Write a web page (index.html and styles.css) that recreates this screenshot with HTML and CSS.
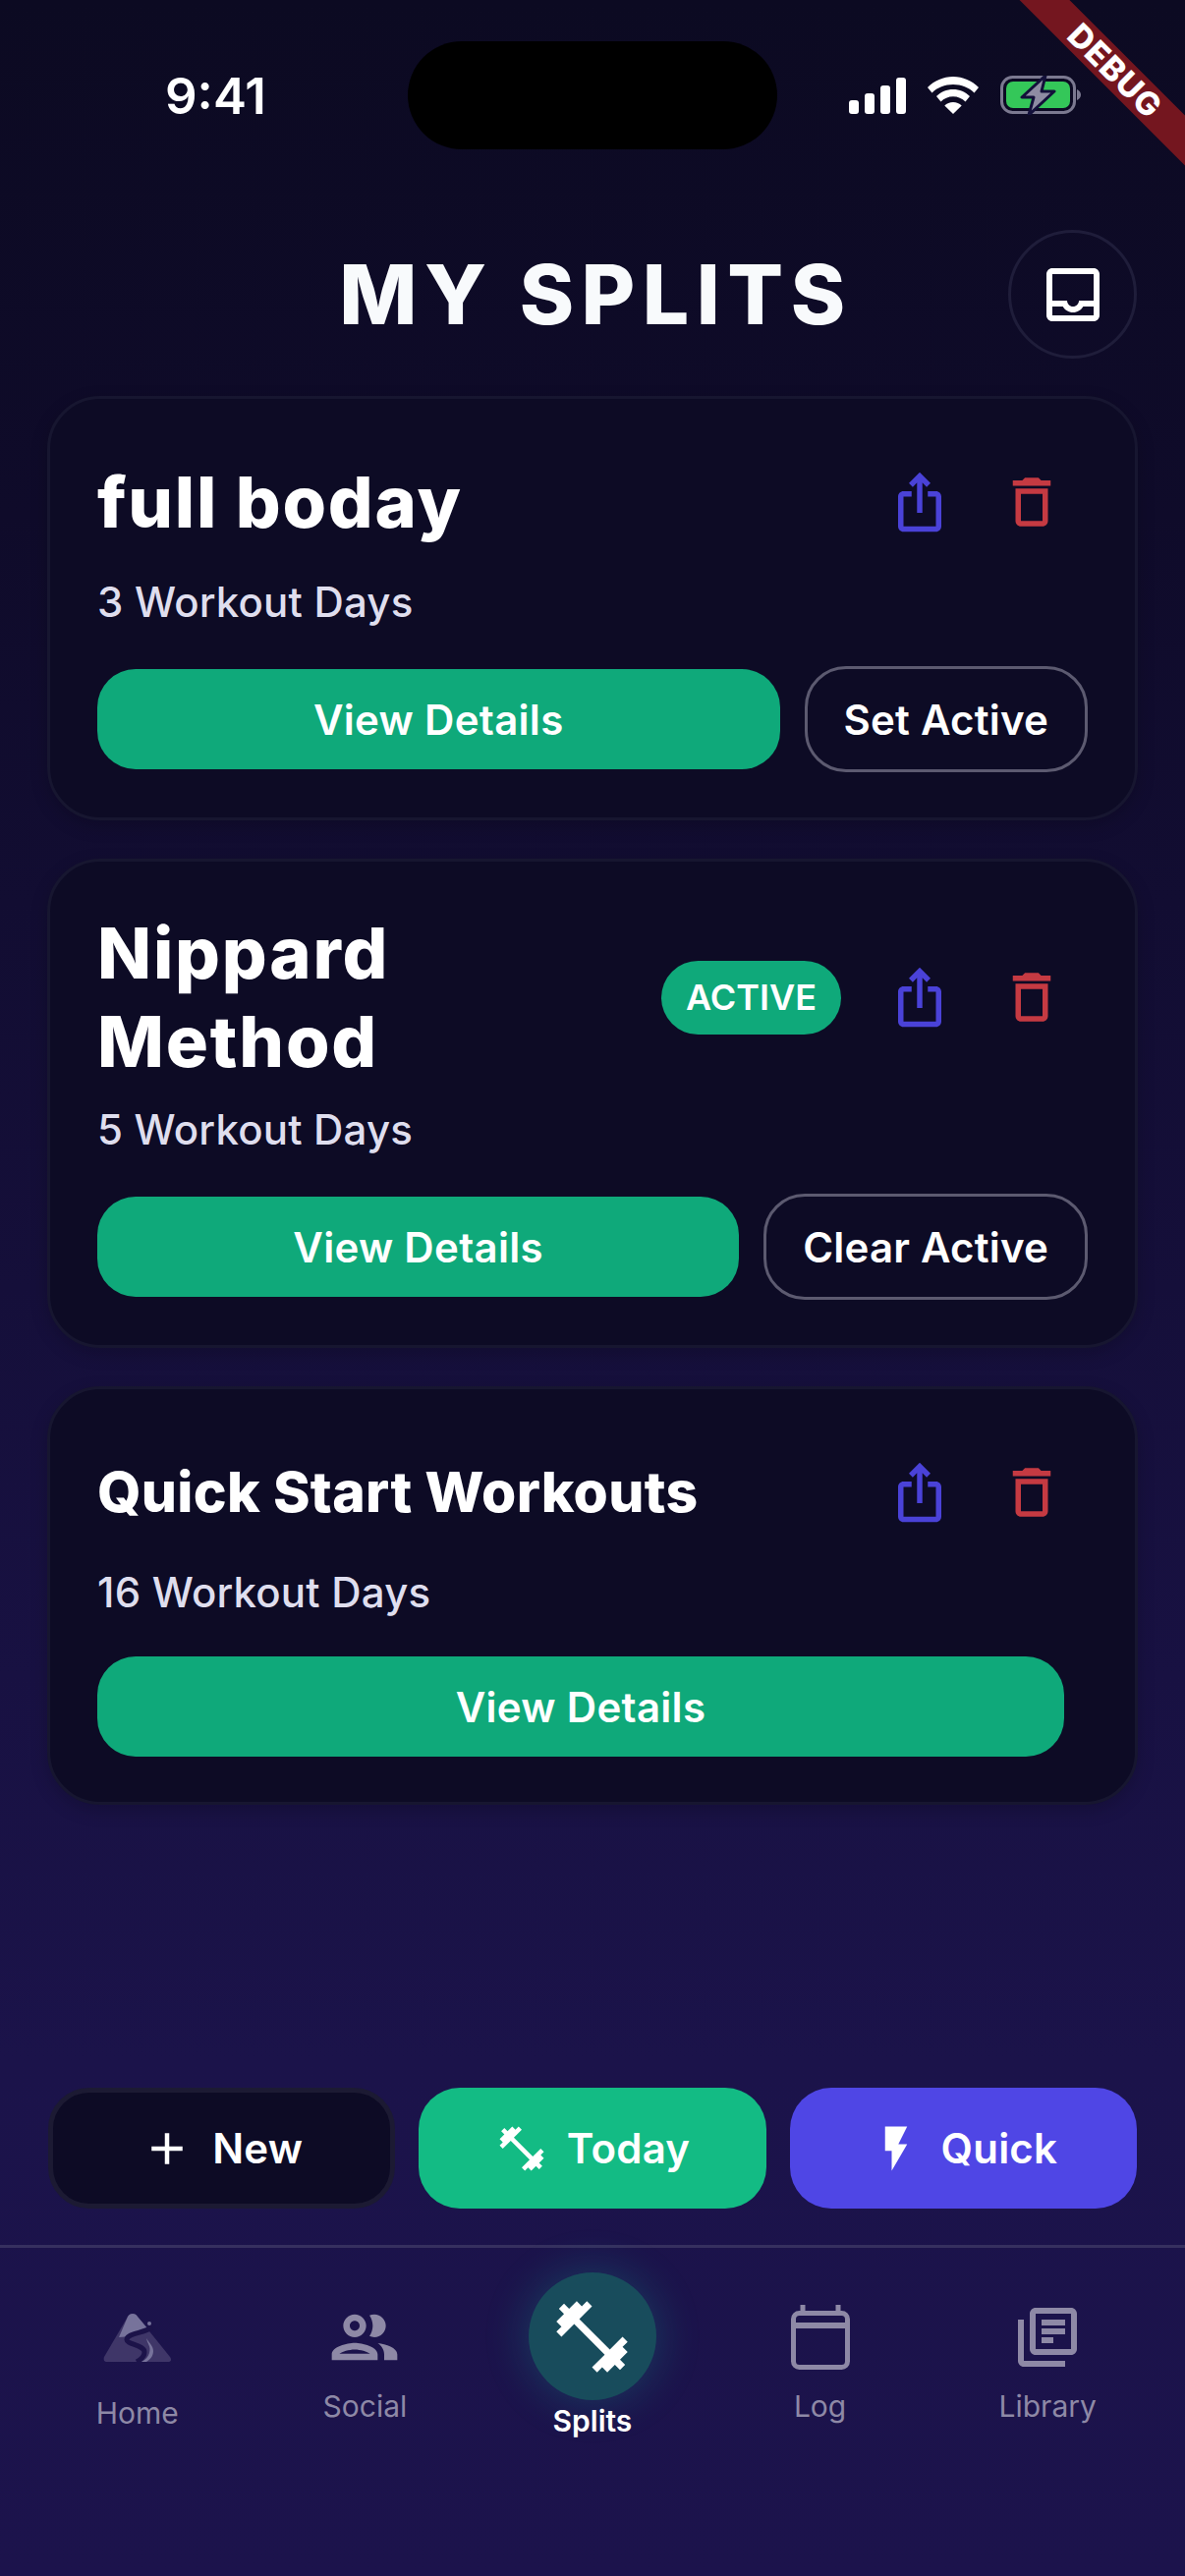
FILE: index.html
```html
<!DOCTYPE html>
<html lang="en">
<head>
<meta charset="utf-8">
<title>My Splits</title>
<link rel="stylesheet" href="styles.css">
</head>
<body>
<div class="screen">
  <div class="debug-banner">DEBUG</div>
  <div class="island"></div>
  <div class="status">
    <span class="time">9:41</span>
    <div class="status-icons">
      <svg class="signal" viewBox="0 0 58 37"><rect x="0" y="23" width="10" height="14" rx="3"/><rect x="16" y="16" width="10" height="21" rx="3"/><rect x="32" y="8" width="10" height="29" rx="3"/><rect x="48" y="0" width="10" height="37" rx="3"/></svg>
      <svg class="wifi" viewBox="0 0 52 38"><path d="M26 0C16 0 7 4 0 11l4.500 5.500C10 11 17.500 8 26 8s16 3 21.500 8.500L52 11C45 4 36 0 26 0z"/><path d="M26 13c-6.500 0-12.500 2.500-17 7l4.500 5.500c3.200-3.300 7.700-5.300 12.500-5.300s9.300 2 12.500 5.300L43 20c-4.500-4.500-10.500-7-17-7z"/><path d="M26 26c-3.500 0-6.500 1.300-8.700 3.500L26 38l8.700-8.500C32.500 27.300 29.500 26 26 26z"/></svg>
      <svg class="battery" viewBox="0 0 82 40"><rect x="1.500" y="1.500" width="74" height="36" rx="11" fill="none" stroke="#7b7990" stroke-width="3"/><path d="M78 14c2.500 1 4 3 4 5.500S80.500 24 78 25z" fill="#7b7990"/><rect x="6" y="6" width="65" height="27" rx="7" fill="#34c759"/><path d="M46 0L22 22h12l-5 18 26-24H42z" fill="#8e8ca3" stroke="#13103a" stroke-width="3" stroke-linejoin="round"/></svg>
    </div>
  </div>

  <header class="header">
    <span></span>
    <h1 class="page-title">MY SPLITS</h1>
    <button class="inbox-btn">
      <svg class="inbox-icon" viewBox="0 0 24 24"><path d="M19 3H5c-1.100 0-2 .9-2 2v14c0 1.100.9 2 2 2h14c1.100 0 2-.9 2-2V5c0-1.100-.9-2-2-2zm0 16H5v-3h3.560c.69 1.190 1.970 2 3.450 2s2.750-.81 3.450-2H19v3zm0-5h-4.990c0 1.100-.9 2-2 2s-2-.9-2-2H5V5h14v9z"/></svg>
    </button>
  </header>

  <main class="cards">
    <section class="card">
      <div class="card-top">
        <h2 class="card-title">full boday</h2>
        <div class="card-tools">
          <span class="tool"><svg class="tool-icon share" viewBox="0 0 24 24"><path d="M16 5l-1.420 1.420-1.590-1.590V16h-1.980V4.830L9.420 6.420 8 5l4-4 4 4zm4 5v11c0 1.100-.9 2-2 2H6c-1.110 0-2-.9-2-2V10c0-1.110.89-2 2-2h3v2H6v11h12V10h-3V8h3c1.100 0 2 .89 2 2z"/></svg></span>
          <span class="tool"><svg class="tool-icon trash" viewBox="0 0 24 24"><path d="M6 19c0 1.100.9 2 2 2h8c1.100 0 2-.9 2-2V7H6v12zM8 9h8v10H8V9zm7.500-5l-1-1h-5l-1 1H5v2h14V4h-3.500z"/></svg></span>
        </div>
      </div>
      <p class="card-sub">3 Workout Days</p>
      <div class="card-actions">
        <button class="btn-primary">View Details</button>
        <button class="btn-outline">Set Active</button>
      </div>
    </section>

    <section class="card">
      <div class="card-top">
        <h2 class="card-title wrap">Nippard Method</h2>
        <span class="badge">ACTIVE</span>
        <div class="card-tools">
          <span class="tool"><svg class="tool-icon share" viewBox="0 0 24 24"><path d="M16 5l-1.420 1.420-1.590-1.590V16h-1.980V4.830L9.420 6.420 8 5l4-4 4 4zm4 5v11c0 1.100-.9 2-2 2H6c-1.110 0-2-.9-2-2V10c0-1.110.89-2 2-2h3v2H6v11h12V10h-3V8h3c1.100 0 2 .89 2 2z"/></svg></span>
          <span class="tool"><svg class="tool-icon trash" viewBox="0 0 24 24"><path d="M6 19c0 1.100.9 2 2 2h8c1.100 0 2-.9 2-2V7H6v12zM8 9h8v10H8V9zm7.500-5l-1-1h-5l-1 1H5v2h14V4h-3.500z"/></svg></span>
        </div>
      </div>
      <p class="card-sub">5 Workout Days</p>
      <div class="card-actions">
        <button class="btn-primary">View Details</button>
        <button class="btn-outline">Clear Active</button>
      </div>
    </section>

    <section class="card">
      <div class="card-top">
        <h2 class="card-title small">Quick Start Workouts</h2>
        <div class="card-tools">
          <span class="tool"><svg class="tool-icon share" viewBox="0 0 24 24"><path d="M16 5l-1.420 1.420-1.590-1.590V16h-1.980V4.830L9.420 6.420 8 5l4-4 4 4zm4 5v11c0 1.100-.9 2-2 2H6c-1.110 0-2-.9-2-2V10c0-1.110.89-2 2-2h3v2H6v11h12V10h-3V8h3c1.100 0 2 .89 2 2z"/></svg></span>
          <span class="tool"><svg class="tool-icon trash" viewBox="0 0 24 24"><path d="M6 19c0 1.100.9 2 2 2h8c1.100 0 2-.9 2-2V7H6v12zM8 9h8v10H8V9zm7.500-5l-1-1h-5l-1 1H5v2h14V4h-3.500z"/></svg></span>
        </div>
      </div>
      <p class="card-sub">16 Workout Days</p>
      <div class="card-actions single">
        <button class="btn-primary">View Details</button>
      </div>
    </section>
  </main>

  <div class="quick-row">
    <button class="qa qa-new"><svg class="qa-icon" viewBox="0 0 24 24"><path d="M19 13h-6v6h-2v-6H5v-2h6V5h2v6h6v2z"/></svg>New</button>
    <button class="qa qa-today"><svg class="qa-icon" viewBox="0 0 24 24"><path d="M20.570 14.860L22 13.430 20.570 12 17 15.570 8.430 7 12 3.430 10.570 2 9.140 3.430 7.710 2 5.570 4.140 4.140 2.710 2.710 4.140l1.430 1.430L2 7.710l1.430 1.430L2 10.570 3.430 12 7 8.430 15.570 17 12 20.570 13.430 22l1.430-1.430L16.290 22l2.140-2.140 1.430 1.430 1.430-1.430-1.430-1.430L22 16.290z"/></svg>Today</button>
    <button class="qa qa-quick"><svg class="qa-icon" viewBox="0 0 24 24"><path d="M7 2v11h3v9l7-12h-4l4-8z"/></svg>Quick</button>
  </div>

  <nav class="nav">
    <div class="nav-item home">
      <div class="nav-icon">
        <svg class="home-icon" viewBox="0 0 70 49">
          <path d="M30 0c2 0 4 1 5 3l33 41c2 3 1 5-2 5H4c-3 0-4-2-3-5L25 3c1-2 3-3 5-3z" fill="#3f3668"/>
          <path d="M30 0c2 0 4 1 5 3l11 13-18 7-12 1L25 3c1-2 3-3 5-3z" fill="#77739b"/>
          <circle cx="47" cy="10" r="2" fill="#77739b"/>
          <path d="M50 14C40 20 25 20 24 26c-1 5 18 6 18 13 0 5-4 8-8 10" fill="none" stroke="#1c1349" stroke-width="5"/>
          <path d="M44 25c1 6 5 8 3 15-1 4-4 7-8 9h5c5-3 7-7 7-11 0-5-4-8-7-13z" fill="#77739b"/>
        </svg>
      </div>
      <span class="nav-label">Home</span>
    </div>
    <div class="nav-item">
      <div class="nav-icon">
        <svg class="social-icon" viewBox="0 0 24 24"><path d="M9 13.750c-2.340 0-7 1.170-7 3.500V19h14v-1.750c0-2.330-4.660-3.500-7-3.500zM4.340 17c.84-.58 2.870-1.250 4.660-1.250s3.820.67 4.660 1.250H4.340zM9 12c1.930 0 3.500-1.570 3.500-3.500S10.930 5 9 5 5.500 6.570 5.500 8.500 7.070 12 9 12zm0-5c.83 0 1.500.67 1.500 1.500S9.830 10 9 10s-1.500-.67-1.500-1.500S8.170 7 9 7zm7.040 6.810c1.160.84 1.960 1.960 1.960 3.440V19h4v-1.750c0-2.020-3.500-3.170-5.960-3.440zM15 12c1.930 0 3.500-1.570 3.500-3.500S16.930 5 15 5c-.54 0-1.040.13-1.500.35.63.89 1 1.980 1 3.150s-.37 2.260-1 3.150c.46.22.96.35 1.500.35z"/></svg>
      </div>
      <span class="nav-label">Social</span>
    </div>
    <div class="nav-item active">
      <div class="nav-bubble">
        <svg class="bubble-icon" viewBox="0 0 24 24"><path d="M20.570 14.860L22 13.430 20.570 12 17 15.570 8.430 7 12 3.430 10.570 2 9.140 3.430 7.710 2 5.570 4.140 4.140 2.710 2.710 4.140l1.430 1.430L2 7.710l1.430 1.430L2 10.570 3.430 12 7 8.430 15.570 17 12 20.570 13.430 22l1.430-1.430L16.290 22l2.140-2.140 1.430 1.430 1.430-1.430-1.430-1.430L22 16.290z"/></svg>
      </div>
      <span class="nav-label">Splits</span>
    </div>
    <div class="nav-item">
      <div class="nav-icon">
        <svg class="log-icon" viewBox="0 0 60 66"><rect x="2.500" y="8.500" width="55" height="55" rx="6" fill="none" stroke-width="5"/><path d="M3 21h54" fill="none" stroke-width="6"/><path d="M12 0v9M48 0v9" fill="none" stroke-width="5"/></svg>
      </div>
      <span class="nav-label">Log</span>
    </div>
    <div class="nav-item">
      <div class="nav-icon">
        <svg class="library-icon" viewBox="0 0 24 24"><path d="M4 6H2v14c0 1.100.9 2 2 2h14v-2H4V6zm16-4H8c-1.100 0-2 .9-2 2v12c0 1.100.9 2 2 2h12c1.100 0 2-.9 2-2V4c0-1.100-.9-2-2-2zm0 14H8V4h12v12zm-10-7h8v2h-8zm0 3h4v2h-4zm0-6h8v2h-8z"/></svg>
      </div>
      <span class="nav-label">Library</span>
    </div>
  </nav>
</div>
</body>
</html>
```
FILE: styles.css
```css
* { box-sizing: border-box; }
html, body { margin: 0; padding: 0; }
body { width: 1206px; height: 2622px; overflow: hidden; font-family: "Inter", "Liberation Sans", sans-serif; color: #fff; }
button { font-family: inherit; color: inherit; border: 0; background: none; padding: 0; }
h1, h2, p { margin: 0; }

.screen { position: relative; width: 1206px; height: 2622px; overflow: hidden; display: flex; flex-direction: column; background: linear-gradient(180deg, #0c0a22 0%, #0f0b2a 20%, #1b134a 80%, #1c134c 100%); }

.debug-banner { position: absolute; left: 985px; top: 54px; width: 300px; height: 36px; transform: rotate(45deg); background: #74161f; color: #fff; font-size: 33px; line-height: 36px; font-weight: 800; text-align: center; letter-spacing: 1px; z-index: 5; }
.island { position: absolute; left: 415px; top: 42px; width: 376px; height: 110px; border-radius: 55px; background: #000; }

.status { height: 234px; padding: 68px 106px 0 168px; display: flex; justify-content: space-between; align-items: flex-start; }
.time { font-size: 51px; line-height: 60px; font-weight: 600; }
.status-icons { display: flex; align-items: flex-start; margin-top: 10px; }
.signal { width: 58px; height: 37px; fill: #fff; margin-top: 1px; }
.wifi { width: 52px; height: 38px; fill: #fff; margin-left: 22px; }
.battery { width: 82px; height: 40px; margin-left: 22px; margin-top: -1px; }

.header { display: grid; grid-template-columns: 1fr auto 1fr; align-items: center; padding: 0 49px; height: 131px; }
.page-title { font-size: 84px; line-height: 1; font-weight: 800; letter-spacing: 7.5px; color: #f8fafc; text-align: center; padding-left: 7px; }
.inbox-btn { justify-self: end; width: 131px; height: 131px; border-radius: 50%; border: 3px solid #1f1d3a; display: flex; align-items: center; justify-content: center; }
.inbox-icon { width: 72px; height: 72px; fill: #fff; }

.cards { display: flex; flex-direction: column; gap: 39px; padding: 38px 48px 0; }
.card { background: #0d0b25; border: 3px solid #171630; border-radius: 54px; padding: 48px 48px 46px; box-shadow: 0 6px 18px rgba(0,0,0,.18); }
.card-top { display: flex; align-items: center; min-height: 114px; }
.card-title { flex: 1; font-size: 72px; line-height: 90px; font-weight: 800; letter-spacing: 1.8px; }
.card-title.wrap { padding-right: 60px; }
.card-title.small { font-size: 57px; line-height: 72px; letter-spacing: .3px; }
.card-tools { display: flex; }
.tool { width: 114px; height: 114px; display: flex; align-items: center; justify-content: center; }
.tool-icon { width: 66px; height: 66px; }
.share { fill: #4a42d8; }
.trash { fill: #c53a42; }
.badge { margin-right: 23px; height: 75px; width: 183px; border-radius: 38px; background: #0fa97a; font-size: 36px; line-height: 75px; font-weight: 600; text-align: center; }

.card-sub { margin-top: 18px; font-size: 42px; line-height: 54px; font-weight: 500; letter-spacing: .2px; color: #dfdeee; }
.card-actions { margin-top: 38px; display: flex; align-items: center; gap: 25px; }
.card-actions.single { padding-right: 24px; }
.btn-primary { flex: 1; height: 102px; border-radius: 39px; background: #0fa97a; font-size: 42px; font-weight: 600; letter-spacing: .3px; }
.btn-outline { height: 108px; padding: 0 37px; border-radius: 42px; border: 3px solid #5c5a70; font-size: 42px; font-weight: 600; letter-spacing: .2px; }

.quick-row { margin-top: auto; display: grid; grid-template-columns: repeat(3, 1fr); gap: 24px; padding: 0 49px; }
.qa { height: 123px; border-radius: 42px; display: flex; align-items: center; justify-content: center; gap: 19px; font-size: 42px; font-weight: 600; letter-spacing: .2px; }
.qa-icon { width: 54px; height: 54px; fill: #fff; }
.qa-new { background: #0d0b25; border: 5px solid #1c1a33; }
.qa-today { background: #13bb84; }
.qa-quick { background: #4f46e5; }

.nav { margin-top: 37px; height: 337px; border-top: 3px solid #36305f; display: flex; padding: 0 24px; }
.nav-item { flex: 1; display: flex; flex-direction: column; align-items: center; padding-top: 49px; color: #8e89a6; }
.nav-item.active { padding-top: 25px; color: #fff; }
.nav-icon { height: 84px; display: flex; align-items: center; justify-content: center; }
.nav-icon svg { fill: #8e89a6; stroke: #8e89a6; stroke-width: 0; }
.nav-bubble { width: 130px; height: 130px; border-radius: 50%; background: #184c5c; box-shadow: 0 0 42px 6px rgba(20,184,166,.2); display: flex; align-items: center; justify-content: center; }
.bubble-icon { width: 87px; height: 87px; fill: #fff; }
.nav-label { margin-top: 8px; font-size: 30px; line-height: 40px; font-weight: 400; }
.home .nav-label { margin-top: 15px; }
.active .nav-label { margin-top: 1px; font-weight: 600; }
.nav-icon .home-icon { width: 70px; height: 49px; stroke: none; }
.social-icon { width: 80px; height: 80px; }
.nav-icon .log-icon { width: 60px; height: 66px; fill: none; stroke-width: 5; }
.library-icon { width: 72px; height: 72px; }
```
